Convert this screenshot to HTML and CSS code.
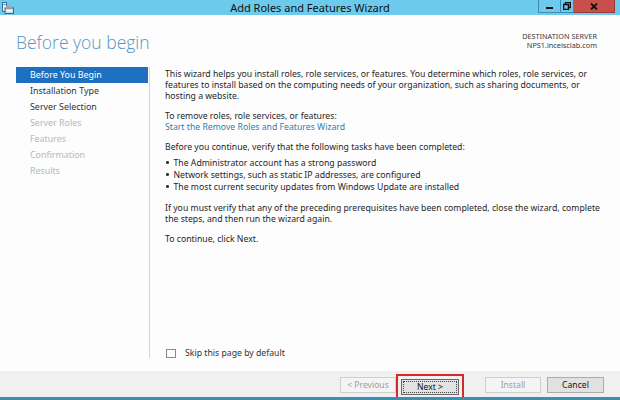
FILE: index.html
```html
<!DOCTYPE html>
<html>
<head>
<meta charset="utf-8">
<link rel="stylesheet" href="styles.css">
</head>
<body>
<div class="window">
  <div class="titlebar">
    <svg class="appicon" width="12" height="12" viewBox="0 0 12 12">
      <rect x="0.5" y="0.5" width="4" height="9" fill="#e9f3fb" stroke="#3b6e99"/>
      <rect x="1.5" y="2" width="2" height="1" fill="#3b6e99"/>
      <rect x="3" y="6" width="8.5" height="5.5" fill="#cfd8df" stroke="#51606c" stroke-width="1"/>
      <rect x="4" y="4" width="6" height="2" fill="#9aa7b1"/>
      <rect x="4.5" y="8" width="5.5" height="1.5" fill="#ffffff"/>
    </svg>
    <div class="title">Add Roles and Features Wizard</div>
    <div class="controls">
      <div class="ctl min"><span class="dash"></span></div>
      <div class="ctl restore">
        <svg width="8" height="8" viewBox="0 0 8 8"><rect x="2.5" y="0.5" width="5" height="5" fill="none" stroke="#111" stroke-width="1.4"/><rect x="0.5" y="2.5" width="5" height="5" fill="#6ccbec" stroke="#111" stroke-width="1.6"/></svg>
      </div>
      <div class="ctl close">
        <svg width="8" height="7" viewBox="0 0 8 7"><path d="M1 0.5 L7 6.5 M7 0.5 L1 6.5" stroke="#111" stroke-width="1.8"/></svg>
      </div>
    </div>
  </div>

  <div class="header">
    <h1 class="heading">Before you begin</h1>
    <div class="dest">
      <div>DESTINATION SERVER</div>
      <div>NPS1.inceisclab.com</div>
    </div>
  </div>

  <div class="main">
    <div class="nav">
      <div class="navitem selected">Before You Begin</div>
      <div class="navitem">Installation Type</div>
      <div class="navitem">Server Selection</div>
      <div class="navitem disabled">Server Roles</div>
      <div class="navitem disabled">Features</div>
      <div class="navitem disabled">Confirmation</div>
      <div class="navitem disabled">Results</div>
    </div>
    <div class="content">
      <div class="text">
        <p>This wizard helps you install roles, role services, or features. You determine which roles, role services, or<br>features to install based on the computing needs of your organization, such as sharing documents, or<br>hosting a website.</p>
        <p>To remove roles, role services, or features:<br><span class="link">Start the Remove Roles and Features Wizard</span></p>
        <p class="lead">Before you continue, verify that the following tasks have been completed:</p>
        <ul class="bullets">
          <li>The Administrator account has a strong password</li>
          <li>Network settings, such as static IP addresses, are configured</li>
          <li>The most current security updates from Windows Update are installed</li>
        </ul>
        <p>If you must verify that any of the preceding prerequisites have been completed, close the wizard, complete<br>the steps, and then run the wizard again.</p>
        <p>To continue, click Next.</p>
      </div>
      <label class="skip"><span class="checkbox"></span>Skip this page by default</label>
    </div>
  </div>

  <div class="footer">
    <div class="btn disabled">&lt; Previous</div>
    <div class="nextwrap"><div class="btn primary">Next &gt;</div></div>
    <div class="btn disabled install">Install</div>
    <div class="btn">Cancel</div>
  </div>
  <div class="taskstrip"></div>
</div>
</body>
</html>
```

FILE: styles.css
```css
* { box-sizing: border-box; }
html, body { margin: 0; padding: 0; }
body {
  width: 620px;
  height: 400px;
  overflow: hidden;
  font-family: "Noto Sans", "Open Sans", sans-serif;
  color: #262626;
  background: #ffffff;
}
.window {
  width: 620px;
  height: 400px;
  display: flex;
  flex-direction: column;
  background: #fdfdfd;
}
.titlebar {
  height: 15px;
  flex: none;
  background: #6ccbec;
  display: flex;
  align-items: center;
  position: relative;
}
.appicon { margin-left: 2px; margin-top: 1px; }
.title {
  position: absolute;
  left: 0;
  right: 0;
  top: 0;
  text-align: center;
  font-size: 11px;
  line-height: 15px;
  color: #111;
}
.controls {
  position: absolute;
  top: 0;
  right: 5px;
  display: flex;
  height: 13px;
}
.ctl {
  height: 13px;
  display: flex;
  align-items: center;
  justify-content: center;
  border: 1px solid #3c8cae;
  border-top: none;
}
.min { width: 23px; }
.restore { width: 13px; border-left: none; }
.close { width: 41px; background: #c9504a; border-color: #9a3a36; border-left: none; }
.dash { width: 7px; height: 2px; background: #111; margin-top: 4px; }

.header {
  height: 52px;
  flex: none;
  display: flex;
  justify-content: space-between;
  align-items: flex-start;
  padding: 0 23px 0 16px;
}
.heading {
  margin: 17px 0 0 0;
  font-weight: 300;
  font-size: 17.5px;
  line-height: 20px;
  color: #5594c4;
  font-family: "Open Sans", "Noto Sans", sans-serif;
}
.dest {
  margin-top: 17px;
  text-align: right;
  font-size: 7.3px;
  line-height: 8.5px;
  color: #3a3a3a;
}

.main {
  flex: 1;
  display: flex;
}
.nav {
  width: 134px;
  margin-left: 16px;
  margin-bottom: 13px;
  border-right: 1px solid #d5d5d5;
  padding-top: 0;
}
.navitem {
  height: 16px;
  line-height: 16px;
  padding-left: 14px;
  font-size: 8.9px;
  color: #333;
  white-space: nowrap;
}
.navitem.selected {
  background: #1f6fc0;
  color: #ffffff;
  width: 132px;
}
.navitem.disabled { color: #b8b8b8; }

.content {
  flex: 1;
  padding-left: 15px;
  display: flex;
  flex-direction: column;
  justify-content: space-between;
  padding-bottom: 13px;
}
.text { font-size: 8.7px; line-height: 11px; color: #262626; padding-top: 1.5px; white-space: nowrap; }
.text p { margin: 0 0 9px 0; }
.text p.lead { margin-bottom: 4.5px; }
.link { color: #2f7fb2; }
.bullets {
  list-style: none;
  margin: 0 0 9.5px 0;
  padding: 0;
  line-height: 12px;
}
.bullets li::before {
  content: "";
  display: inline-block;
  width: 2.5px;
  height: 2.5px;
  background: #333;
  border-radius: 50%;
  margin: 0 5px 2px 1px;
  vertical-align: middle;
}
.skip {
  display: flex;
  align-items: center;
  font-size: 8.7px;
  color: #333;
  height: 10px;
}
.checkbox {
  width: 10px;
  height: 9px;
  border: 1px solid #8a8a8a;
  background: #fff;
  margin-right: 9px;
  margin-left: 1px;
}

.footer {
  height: 26px;
  flex: none;
  background: #f0f0f0;
  display: flex;
  align-items: center;
  justify-content: flex-end;
  padding-right: 16px;
  padding-top: 2px;
}
.btn {
  height: 16px;
  width: 57px;
  border: 1px solid #acacac;
  background: #e1e1e1;
  font-size: 8.6px;
  line-height: 14px;
  text-align: center;
  color: #111;
  white-space: nowrap;
}
.btn.disabled {
  background: #f4f4f4;
  border-color: #cfcfcf;
  color: #a0a0a0;
  width: 56px;
}
.nextwrap {
  border: 2px solid #d42a2a;
  padding: 3px 3px 5px 3px;
  margin-left: 0;
  margin-top: 4px;
  height: 27px;
}
.btn.primary {
  width: 58px;
  border: 1px solid #6a6a6a;
  outline: 1px dotted #444;
  outline-offset: -3px;
  background: #e3e3e3;
}
.install { margin-left: 21px; margin-right: 6px; }
.taskstrip {
  height: 3px;
  flex: none;
  background: #3e8eb4;
}
```
